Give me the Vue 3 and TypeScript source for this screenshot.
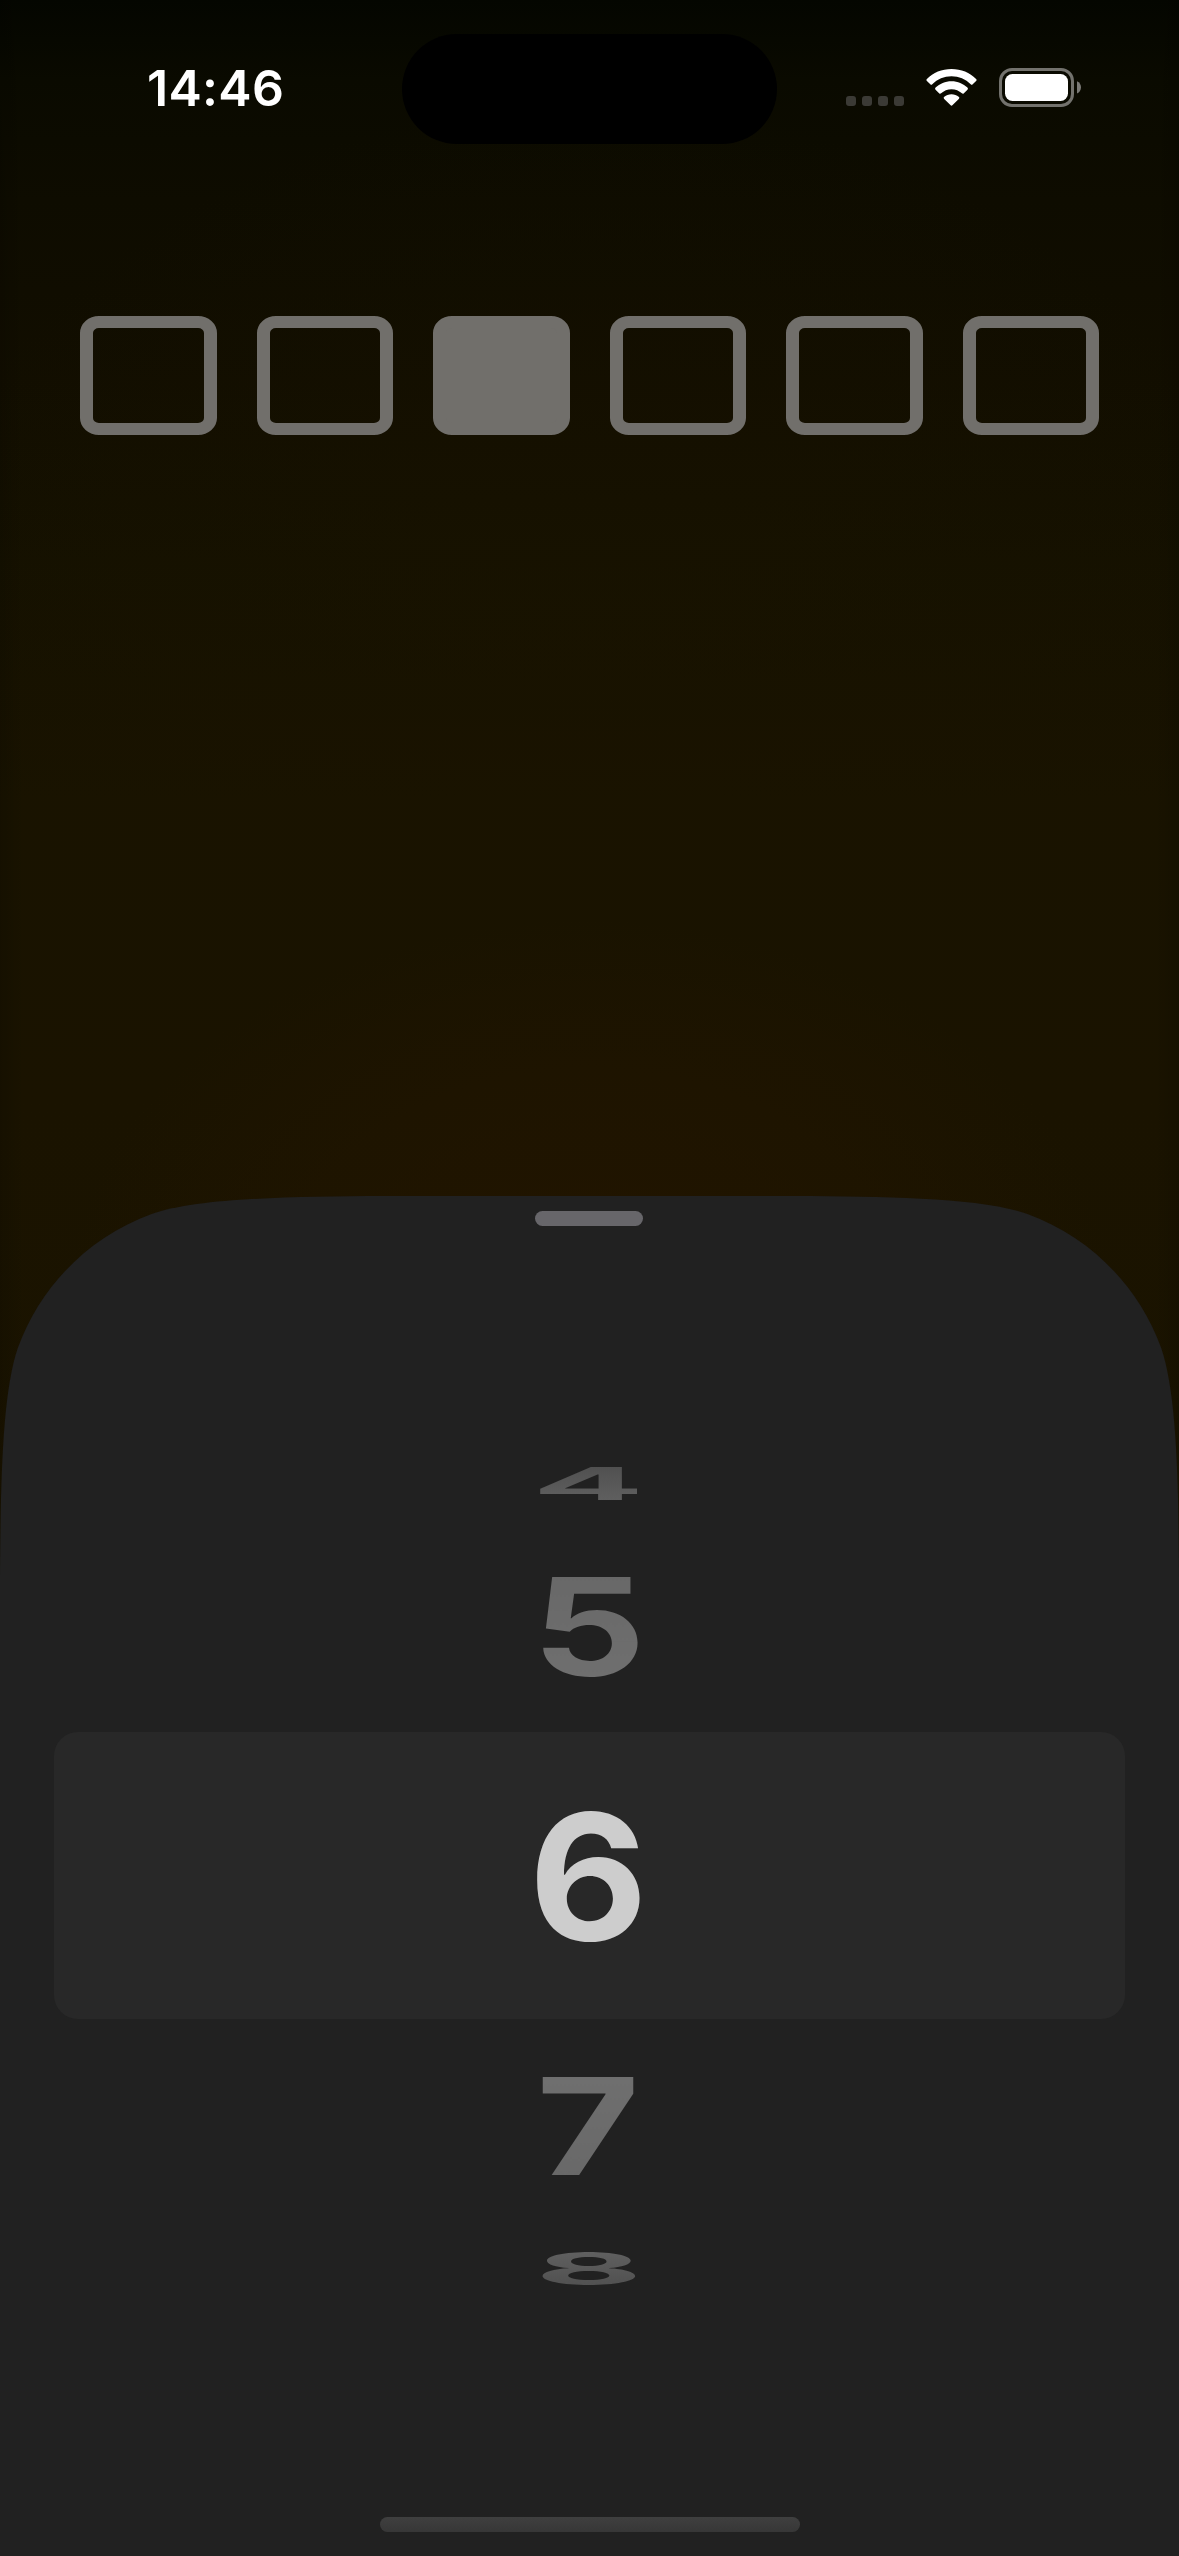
<script setup lang="ts">
interface WheelItem {
  value: number
  kind: string
}

const activeSlot = 2
const slots: number[] = [0, 1, 2, 3, 4, 5]

const wheel: WheelItem[] = [
  { value: 4, kind: 'far above-far' },
  { value: 5, kind: 'near above-near' },
  { value: 6, kind: 'selected' },
  { value: 7, kind: 'near below-near' },
  { value: 8, kind: 'far below-far' },
]
</script>

<template>
  <div class="screen">
    <header class="status">
      <div class="clock">14:46</div>
      <div class="island"></div>
      <div class="indicators">
        <div class="signal"><i v-for="n in 4" :key="n"></i></div>
        <svg class="wifi" width="51" height="37" viewBox="0 0 51 37" fill="#fff">
          <path d="M25.5 0C35.2 0 43.8 3.6 50.1 9.9Q51.1 10.9 50.1 11.9L46.7 15.2Q45.7 16.2 44.7 15.2C39.6 10.2 32.9 7.3 25.5 7.3S11.4 10.2 6.3 15.2Q5.3 16.2 4.3 15.2L.9 11.9Q-.1 10.9.9 9.9C7.2 3.6 15.8 0 25.5 0Z" />
          <path d="M25.5 12.3C31.8 12.3 37.3 14.8 41.4 18.6Q42.5 19.6 41.5 20.7L37.9 24.2Q36.9 25.2 35.9 24.3C33.2 21.8 29.5 20.2 25.5 20.2S17.8 21.8 15.1 24.3Q14.1 25.2 13.1 24.2L9.5 20.7Q8.5 19.6 9.6 18.6C13.7 14.8 19.2 12.3 25.5 12.3Z" />
          <path d="M25.5 25.2C28.3 25.2 30.8 26.1 32.7 27.7Q33.9 28.8 32.8 29.9L26.6 36.1Q25.5 37.2 24.4 36.1L18.2 29.9Q17.1 28.8 18.3 27.7C20.2 26.1 22.7 25.2 25.5 25.2Z" />
        </svg>
        <svg class="battery" width="83" height="39" viewBox="0 0 83 39">
          <rect x="1.5" y="1.5" width="72" height="36" rx="11.5" fill="none" stroke="#73726d" stroke-width="3" />
          <rect x="6" y="6" width="63" height="27" rx="7.5" fill="#fff" />
          <path d="M78 13.2C80.6 14.3 82 16.7 82 19.3S80.6 24.5 78 25.6Z" fill="#7b7a76" />
        </svg>
      </div>
    </header>

    <div class="slots">
      <div v-for="slot in slots" :key="slot" class="slot" :class="{ active: slot === activeSlot }"></div>
    </div>

    <section class="sheet">
      <div class="grabber"></div>
      <div class="wheel">
        <div v-for="item in wheel" :key="item.value" class="row" :class="item.kind">
          <span class="digit">{{ item.value }}</span>
        </div>
      </div>
      <div class="home"></div>
    </section>
  </div>
</template>

<style>
body {
  margin: 0;
  background: #000;
}
</style>

<style scoped>
.screen {
  width: 1179px;
  height: 2556px;
  overflow: hidden;
  display: flex;
  flex-direction: column;
  font-family: Inter, "Liberation Sans", sans-serif;
  background:
    linear-gradient(90deg, rgba(0, 0, 0, 0.15), transparent 24px, transparent 1155px, rgba(0, 0, 0, 0.15)),
    radial-gradient(ellipse 520px 380px at 590px 1300px, rgba(36, 21, 0, 0.75), rgba(34, 21, 0, 0.5) 60%, transparent),
    radial-gradient(ellipse 760px 700px at 590px 800px, rgba(26, 19, 0, 0.6), transparent),
    linear-gradient(180deg, #040600 0, #0a0a00 80px, #0e0c00 200px, #120e00 380px, #151100 560px, #191300 800px, #1a1300 1100px, #1b1400 1560px);
}

.status {
  height: 144px;
  box-sizing: border-box;
  padding-top: 34px;
  flex: none;
  display: grid;
  grid-template-columns: 402px 375px 402px;
}

.clock {
  padding-left: 147px;
  color: #fff;
  font-size: 50px;
  font-weight: 600;
  line-height: 108px;
  letter-spacing: 0.3px;
  white-space: nowrap;
}

.island {
  height: 110px;
  border-radius: 55px;
  background: #000;
}

.indicators {
  height: 39px;
  margin-top: 34px;
  padding-left: 69px;
  display: flex;
}

.signal {
  display: flex;
  gap: 6px;
  margin: 28px 22px 0 0;
}

.signal i {
  width: 10px;
  height: 10px;
  border-radius: 3px;
  background: #3b3a35;
}

.wifi {
  margin: 1px 22px 0 0;
}

.slots {
  flex: none;
  height: 119px;
  margin: 172px 80px 0;
  display: grid;
  grid-template-columns: repeat(6, 1fr);
  column-gap: 40px;
}

.slot {
  box-sizing: border-box;
  border: solid #716f6b;
  border-width: 12px 13px;
  border-radius: 19px / 17px;
}

.slot.active {
  background: #716f6b;
}

.sheet {
  flex: none;
  height: 1360px;
  margin-top: 761px;
  box-sizing: border-box;
  padding-top: 15px;
  background: #212121;
  clip-path: path("M0 385C.5 290 1.8 198 18 151.6C40.6 89.5 89.5 40.6 151.6 18C198 1.8 290 .5 385 0H794C889 .5 981 1.8 1027.4 18C1089.5 40.6 1138.4 89.5 1161 151.6C1177.2 198 1178.5 290 1179 385V1360H0Z");
  display: flex;
  flex-direction: column;
}

.grabber {
  width: 108px;
  height: 15px;
  margin-left: 535px;
  border-radius: 7.5px;
  background: #67666a;
}

.wheel {
  margin: 219px 54px 0;
  display: flex;
  flex-direction: column;
}

.row {
  display: flex;
  align-items: center;
  justify-content: center;
}

.far {
  height: 77px;
}

.near {
  height: 210px;
}

.selected {
  height: 287px;
  border-radius: 24px;
  background: #282828;
}

.digit {
  display: block;
  height: 180px;
  margin: -60px 0;
  font-size: 178px;
  font-weight: 700;
  line-height: 180px;
  color: #cdcdcd;
  flex: none;
}

.selected .digit {
  transform: translate(-1.5px, 1px) scale(1.03, 0.985);
}

.near .digit,
.far .digit {
  color: transparent;
  background-clip: text;
}

.above-near .digit {
  background-image: linear-gradient(#676767, #707070);
  transform: translateX(-0.5px) scaleY(0.765);
}

.below-near .digit {
  background-image: linear-gradient(#707070, #676767);
  transform: translate(-1.5px, 3px) scaleY(0.755);
}

.above-far .digit {
  background-image: linear-gradient(#4e4e4e, #626262);
  transform: translateX(-1px) scale(0.935, 0.255);
}

.below-far .digit {
  background-image: linear-gradient(#626262, #4e4e4e);
  transform: translate(-1px, 1px) scale(0.93, 0.252);
}

.home {
  width: 420px;
  height: 15px;
  margin: 211px 0 0 380px;
  border-radius: 7.5px;
  background: linear-gradient(#3f3f3f, #373737);
}
</style>
